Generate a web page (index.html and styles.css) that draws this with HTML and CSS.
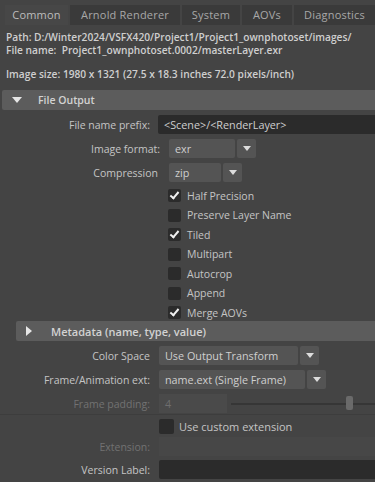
FILE: index.html
```html
<!DOCTYPE html>
<html lang="en">
<head>
  <meta charset="UTF-8">
  <meta name="viewport" content="width=device-width, initial-scale=1.0">
  <title>Render Settings</title>
  <link rel="stylesheet" href="styles.css">
</head>
<body>
  <div class="tabs">
    <div class="tab active tab-common">Common</div>
    <div class="tab tab-arnold">Arnold Renderer</div>
    <div class="tab tab-system">System</div>
    <div class="tab tab-aovs">AOVs</div>
    <div class="tab tab-diag">Diagnostics</div>
  </div>

  <div class="info">
    <div>Path: D:/Winter2024/VSFX420/Project1/Project1_ownphotoset/images/</div>
    <div>File name:&nbsp; Project1_ownphotoset.0002/masterLayer.exr</div>
    <div class="gap">Image size: 1980 x 1321 (27.5 x 18.3 inches 72.0 pixels/inch)</div>
  </div>

  <div class="section-head">
    <span class="arrow-down"></span>
    <span>File Output</span>
  </div>

  <div class="row row-prefix">
    <label>File name prefix:</label>
    <div class="field dark">&lt;Scene&gt;/&lt;RenderLayer&gt;</div>
  </div>

  <div class="row row-out">
    <label>Image format:</label>
    <div class="combo combo-format">
      <div class="field grey">exr</div>
      <div class="drop"><span class="arrow-down small"></span></div>
    </div>
  </div>

  <div class="row row-out">
    <label class="comp-label">Compression</label>
    <div class="combo combo-comp">
      <div class="field grey">zip</div>
      <div class="drop"><span class="arrow-down small"></span></div>
    </div>
  </div>

  <div class="checks">
    <div class="check on"><span class="box"></span>Half Precision</div>
    <div class="check"><span class="box"></span>Preserve Layer Name</div>
    <div class="check on"><span class="box"></span>Tiled</div>
    <div class="check"><span class="box"></span>Multipart</div>
    <div class="check"><span class="box"></span>Autocrop</div>
    <div class="check"><span class="box"></span>Append</div>
    <div class="check on"><span class="box"></span>Merge AOVs</div>
  </div>

  <div class="section-head sub">
    <span class="arrow-right"></span>
    <span>Metadata (name, type, value)</span>
  </div>

  <div class="row row-low">
    <label>Color Space</label>
    <div class="combo combo-space">
      <div class="field grey">Use Output Transform</div>
      <div class="drop"><span class="arrow-down small"></span></div>
    </div>
  </div>

  <div class="row row-low">
    <label>Frame/Animation ext:</label>
    <div class="combo combo-ext">
      <div class="field grey">name.ext (Single Frame)</div>
      <div class="drop"><span class="arrow-down small"></span></div>
    </div>
  </div>

  <div class="row row-low disabled">
    <label>Frame padding:</label>
    <div class="pad-wrap">
      <div class="field pad">4</div>
      <div class="slider"><span class="handle"></span></div>
    </div>
  </div>

  <div class="rule"></div>

  <div class="row row-low row-check">
    <span></span>
    <div class="check"><span class="box"></span>Use custom extension</div>
  </div>

  <div class="row row-low row-ext disabled">
    <label>Extension:</label>
    <div class="field flat"></div>
  </div>

  <div class="row row-low row-version">
    <label>Version Label:</label>
    <div class="field dark"></div>
  </div>
</body>
</html>
```

FILE: styles.css
```css
* {
  box-sizing: border-box;
}
body, html {
  margin: 0;
  padding: 0;
  background: #444444;
  color: #c8c8c8;
  font-family: "Open Sans", "DejaVu Sans", sans-serif;
  font-size: 10px;
  overflow: hidden;
}

/* Tabs */
.tabs {
  display: flex;
  gap: 2px;
  padding: 5px 0 0 5px;
  height: 25px;
  background: #444444;
}
.tab {
  background: #3a3a3a;
  color: #a8a8a8;
  font-size: 11px;
  text-align: center;
  line-height: 20px;
  height: 20px;
  letter-spacing: 0.2px;
}
.tab.active {
  background: #474747;
  color: #bdbdbd;
}
.tab-common { width: 63px; }
.tab-arnold { width: 110px; }
.tab-system { width: 58px; }
.tab-aovs { width: 50px; }
.tab-diag { flex: 1; }

/* Path info */
.info {
  padding: 6px 6px 0 6px;
  font-weight: 600;
  font-size: 10.2px;
  line-height: 13px;
  color: #cfcfcf;
  height: 65px;
}
.info .gap {
  margin-top: 11px;
}

/* Section headers */
.section-head {
  display: flex;
  align-items: center;
  height: 20px;
  margin-left: 2px;
  background: #5c5c5c;
  border-radius: 2px 0 0 2px;
  color: #d2d2d2;
  font-weight: 600;
  font-size: 10.5px;
  gap: 16px;
  padding-left: 10px;
}
.section-head.sub {
  margin-left: 16px;
  margin-top: 0;
  font-size: 11px;
  gap: 19px;
}

.arrow-down {
  display: inline-block;
  width: 0;
  height: 0;
  border-left: 5px solid transparent;
  border-right: 5px solid transparent;
  border-top: 6px solid #e6e6e6;
}
.arrow-down.small {
  border-left-width: 4px;
  border-right-width: 4px;
  border-top-width: 5px;
  border-top-color: #dcdcdc;
}
.arrow-right {
  display: inline-block;
  width: 0;
  height: 0;
  border-top: 5px solid transparent;
  border-bottom: 5px solid transparent;
  border-left: 6px solid #e6e6e6;
}

/* Rows */
.row {
  display: grid;
  align-items: center;
  height: 19px;
  margin-top: 5px;
}
.row label {
  text-align: right;
  font-size: 10.5px;
  color: #c4c4c4;
}
.row-prefix {
  grid-template-columns: 150px 1fr;
  column-gap: 8px;
}
.row-out {
  grid-template-columns: 160px 1fr;
  column-gap: 9px;
  margin-top: 5px;
}
.row-out .comp-label {
  padding-right: 2px;
}
.row-low {
  grid-template-columns: 150px 1fr;
  column-gap: 9px;
  margin-top: 5px;
}

.field {
  height: 19px;
  line-height: 19px;
  padding-left: 6px;
  font-size: 10.8px;
  color: #cfcfcf;
  white-space: nowrap;
  overflow: hidden;
}
.field.dark {
  background: #2b2b2b;
  border-radius: 2px 0 0 2px;
}
.field.grey {
  background: #545454;
  border-radius: 2px;
}
.field.flat {
  background: #474747;
}
.field.pad {
  background: #4a4a4a;
  width: 68px;
  color: #6e6e6e;
}

.combo {
  display: flex;
  gap: 2px;
}
.drop {
  width: 19px;
  height: 19px;
  background: #545454;
  border-radius: 2px;
  display: flex;
  align-items: center;
  justify-content: center;
}
.combo-format .field { width: 66px; }
.combo-comp .field { width: 52px; }
.combo-space .field { width: 139px; }
.combo-ext .field { width: 146px; }

/* Checkboxes */
.checks {
  padding-left: 168px;
  padding-top: 4px;
  height: 139px;
}
.check {
  display: flex;
  align-items: center;
  gap: 6px;
  height: 19.5px;
  font-size: 10.5px;
  color: #c4c4c4;
}
.box {
  position: relative;
  width: 13px;
  height: 13px;
  background: #2b2b2b;
  border-radius: 2px;
}
.check.on .box::after {
  content: "";
  position: absolute;
  left: 4px;
  top: 1px;
  width: 3px;
  height: 7px;
  border-right: 2px solid #f0f0f0;
  border-bottom: 2px solid #f0f0f0;
  transform: rotate(40deg);
}

.row-check .check {
  font-size: 11px;
  gap: 5px;
}
.row-check .box {
  width: 15px;
  height: 15px;
}

/* Disabled rows */
.disabled label {
  color: #727272;
}

.pad-wrap {
  display: flex;
  align-items: center;
  gap: 4px;
}
.slider {
  position: relative;
  flex: 1;
  height: 2px;
  background: #363636;
}
.handle {
  position: absolute;
  left: 115px;
  top: -7px;
  width: 7px;
  height: 14px;
  background: #6a6a6a;
  border-radius: 2px;
}

.rule {
  height: 1px;
  background: #3d3d3d;
  margin-top: 1px;
}
.row.row-check {
  margin-top: 2px;
  height: 18px;
}
.row.row-ext {
  margin-top: 2px;
}
.row.row-version {
  margin-top: 4px;
}
```
